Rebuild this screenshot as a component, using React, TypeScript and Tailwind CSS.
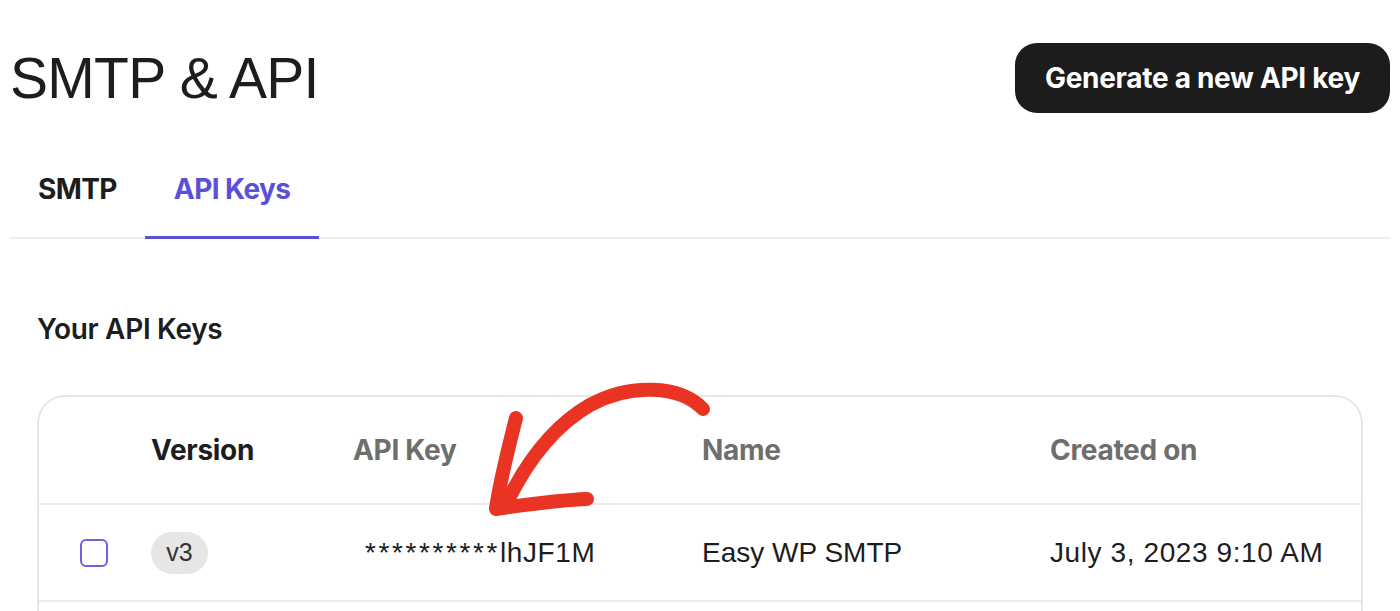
import React from "react";

export default function App() {
  const inter = { fontFamily: "Inter, 'Liberation Sans', sans-serif" };
  return (
    <div className="relative w-[1400px] h-[611px] overflow-hidden bg-white text-[#1b1b1b]" style={inter}>
      {/* header */}
      <div className="flex items-center justify-between pl-[10px] pr-[10px] pt-[43px]">
        <h1 className="text-[57px] leading-none font-normal tracking-[-0.7px] text-[#1d1d1d] [font-family:'Liberation_Sans',Arial,sans-serif]">
          SMTP &amp; API
        </h1>
        <button className="h-[70px] w-[375px] rounded-[22px] bg-[#1c1c1c] text-white text-[28px] font-bold tracking-[-0.3px]">
          Generate a new API key
        </button>
      </div>

      {/* tabs */}
      <div className="mx-[10px] mt-[28px] flex border-b-2 border-[#eeeeee]">
        <div className="flex h-[96px] items-center px-[28px] text-[28px] font-bold text-[#1d1d1d] tracking-[-0.6px]">
          SMTP
        </div>
        <div className="-mb-[2px] flex h-[98px] items-center border-b-[3px] border-[#5b50d8] px-[29px] text-[28px] font-bold text-[#5b50d8] tracking-[-0.6px]">
          API Keys
        </div>
      </div>

      {/* section title */}
      <div className="pl-[37px] pt-[76px] text-[28px] font-semibold leading-none tracking-[-0.3px] text-[#1d1d1d]">
        Your API Keys
      </div>

      {/* table card */}
      <div className="mx-[37px] mt-[52px] w-[1326px] rounded-t-[28px] border-2 border-b-0 border-[#e7e7e7]">
        <div className="grid h-[108px] grid-cols-[112px_202px_349px_348px_1fr] items-center border-b-2 border-[#ececec] text-[28px] font-bold tracking-[-0.3px]">
          <div />
          <div className="text-[#1d1d1d]">Version</div>
          <div className="text-[#6e6e6e]">API Key</div>
          <div className="text-[#6e6e6e]">Name</div>
          <div className="text-[#6e6e6e]">Created on</div>
        </div>
        <div className="grid h-[97px] grid-cols-[112px_202px_349px_348px_1fr] items-center border-b-2 border-[#ececec] text-[28px] text-[#1d1d1d] [font-family:'Liberation_Sans',Arial,sans-serif]">
          <div className="pl-[41px]">
            <div className="h-[28px] w-[28px] rounded-[6px] border-2 border-[#6d64e3] bg-white" />
          </div>
          <div>
            <span className="inline-flex h-[42px] w-[57px] items-center justify-center rounded-full bg-[#e6e6e6] text-[25px] text-[#333333]">
              v3
            </span>
          </div>
          <div className="pl-[12px]">
            <span className="tracking-[2.6px]">**********</span>
            <span className="tracking-[0.6px]">lhJF1M</span>
          </div>
          <div>Easy WP SMTP</div>
          <div className="tracking-[0.6px]">July 3, 2023 9:10 AM</div>
        </div>
        <div className="h-[60px]" />
      </div>

      {/* red hand-drawn arrow */}
      <svg className="pointer-events-none absolute left-0 top-0" width="1400" height="611" viewBox="0 0 1400 611">
        <g fill="none" stroke="#e93323" strokeWidth="14" strokeLinecap="round" strokeLinejoin="round">
          <path d="M703 409 C 680 385, 630 383, 590 405 C 555 425, 528 460, 508 500" />
          <path d="M516 418 C 508 450, 500 480, 496 509 C 530 504, 560 500, 587 499" />
        </g>
      </svg>
    </div>
  );
}
